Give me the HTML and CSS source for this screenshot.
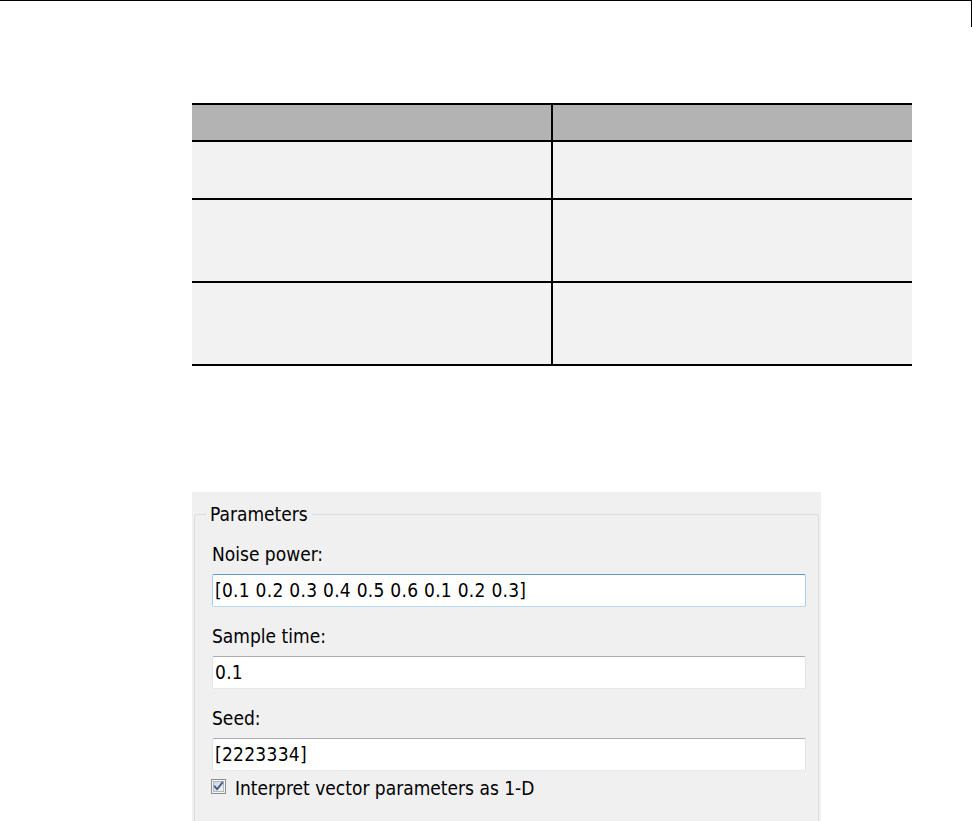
FILE: index.html
```html
<!DOCTYPE html>
<html lang="en">
<head>
<meta charset="utf-8">
<title>Parameters</title>
<link rel="stylesheet" href="styles.css">
</head>
<body>
<div class="page-top"></div>

<div class="tbl">
  <div class="cell head col-left"></div>
  <div class="cell head"></div>
  <div class="cell row-short col-left"></div>
  <div class="cell row-short"></div>
  <div class="cell row-tall col-left"></div>
  <div class="cell row-tall"></div>
  <div class="cell row-tall col-left"></div>
  <div class="cell row-tall"></div>
</div>

<div class="dialog">
  <fieldset class="group">
    <legend class="group-title">Parameters</legend>
    <div class="field">
      <label class="field-label" for="noise">Noise power:</label>
      <input class="field-input is-focused" id="noise" type="text" value="[0.1 0.2 0.3 0.4 0.5 0.6 0.1 0.2 0.3]">
    </div>
    <div class="field">
      <label class="field-label" for="ts">Sample time:</label>
      <input class="field-input" id="ts" type="text" value="0.1">
    </div>
    <div class="field field-last">
      <label class="field-label" for="seed">Seed:</label>
      <input class="field-input" id="seed" type="text" value="[2223334]">
    </div>
    <div class="check-row">
      <svg class="check-box" width="15" height="15" viewBox="0 0 15 15" aria-hidden="true">
        <defs>
          <linearGradient id="cbg" x1="0" y1="0" x2="1" y2="1">
            <stop offset="0" stop-color="#cfd2d6"/>
            <stop offset="1" stop-color="#f7f8f9"/>
          </linearGradient>
        </defs>
        <rect x="0.5" y="0.5" width="14" height="14" fill="#f4f4f4" stroke="#8e8f8f"/>
        <rect x="2.5" y="2.5" width="10" height="10" fill="url(#cbg)" stroke="#b4b8bd"/>
        <path d="M3.6 7.4 L6.2 10.2 L11.4 3.6" fill="none" stroke="#4a5f97" stroke-width="2" stroke-linecap="round" stroke-linejoin="round"/>
      </svg>
      <span class="check-label">Interpret vector parameters as 1-D</span>
    </div>
  </fieldset>
</div>
</body>
</html>
```

FILE: styles.css
```css
html, body {
  margin: 0;
  padding: 0;
  background: #ffffff;
}

body {
  font-family: "DejaVu Sans Condensed", "DejaVu Sans", sans-serif;
  font-stretch: condensed;
  font-size: 19px;
  line-height: 22px;
  color: #000000;
}

.page-top {
  height: 26px;
  margin-right: 1px;
  border-top: 1px solid #000000;
  border-right: 1px solid #000000;
}

/* table */
.tbl {
  margin: 76px 0 0 192px;
  width: 720px;
  display: grid;
  grid-template-columns: 361px 359px;
  border-top: 2px solid #000000;
}

.cell {
  background: #f2f2f2;
  border-bottom: 2px solid #000000;
}

.col-left {
  border-right: 2px solid #000000;
}

.head {
  height: 35px;
  background: #b3b3b3;
}

.row-short {
  height: 56px;
}

.row-tall {
  height: 81px;
}

/* dialog */
.dialog {
  margin: 126px 0 0 192px;
  width: 629px;
  padding-top: 11px;
  background: #f0f0f0;
}

.group {
  margin: 0 2px;
  padding: 18px 12px 40px 17px;
  min-width: 0;
  border: 1px solid #d5dfe5;
  border-radius: 3px;
}

.group-title {
  margin-left: -6px;
  padding: 0 4px;
  line-height: 22px;
}

.field {
  display: flex;
  flex-direction: column;
  gap: 9px;
  margin-bottom: 18px;
}

.field-last {
  margin-bottom: 6px;
}

.field-label {
  display: block;
  line-height: 22px;
}

.field-input {
  display: block;
  box-sizing: border-box;
  width: 100%;
  height: 33px;
  margin: 0;
  padding: 4px 3px 5px 2px;
  font: inherit;
  font-stretch: condensed;
  line-height: 22px;
  letter-spacing: 0.27px;
  color: #000000;
  background: #ffffff;
  border: 1px solid;
  border-color: #abadb3 #e2e3ea #e3e9ef #e2e3ea;
  border-radius: 2px;
  outline: none;
}

.field-input.is-focused {
  border-color: #5c9bd1 #a9cdec #b7d9ed #a9cdec;
}

.check-row {
  display: flex;
  align-items: flex-start;
  gap: 9px;
}

.check-box {
  flex: none;
  margin: 2px 0 0 -1px;
}

.check-label {
  line-height: 22px;
}
```
